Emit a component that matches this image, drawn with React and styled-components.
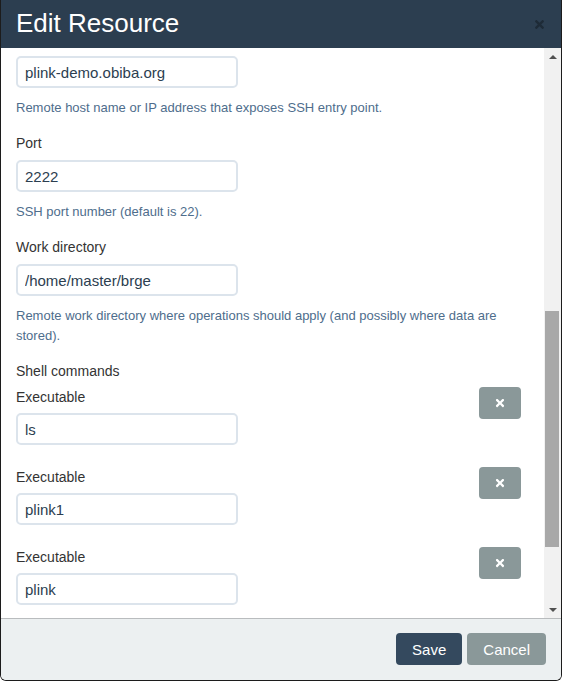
import { useEffect, useRef, useState } from "react";
import styled, { createGlobalStyle } from "styled-components";
import { FaTimes } from "react-icons/fa";

const GlobalStyle = createGlobalStyle`
  html, body {
    margin: 0;
    padding: 0;
    background: #fff;
  }
  body {
    font-family: "Liberation Sans", Arial, Helvetica, sans-serif;
    font-size: 15px;
    color: #2c3e50;
  }
  * {
    box-sizing: border-box;
  }
`;

const Modal = styled.div`
  width: 562px;
  height: 681px;
  display: flex;
  flex-direction: column;
  border: 1px solid #1c1c1c;
  border-top: none;
  border-radius: 0 0 6px 6px;
  overflow: hidden;
  background: #fff;
`;

const Header = styled.div`
  height: 48px;
  flex: none;
  background: #2c3e50;
  display: flex;
  align-items: center;
  justify-content: space-between;
  padding: 0 15px 0 15px;
`;

const Title = styled.h4`
  margin: 0 0 2px;
  color: #fff;
  font-size: 26px;
  font-weight: 400;
  line-height: 1;
`;

const Close = styled.button`
  border: none;
  background: none;
  padding: 0;
  color: #000;
  opacity: 0.3;
  display: flex;
  align-items: center;
  cursor: pointer;
`;

const Body = styled.div`
  flex: 1;
  min-height: 0;
  display: flex;
`;

const Content = styled.div`
  flex: 1;
  overflow: hidden;
  padding: 15px;
`;

const ScrollBar = styled.div`
  width: 17px;
  flex: none;
  background: #f1f1f1;
  display: flex;
  flex-direction: column;
`;

const Arrow = styled.div`
  height: 17px;
  flex: none;
  display: flex;
  justify-content: center;
  align-items: center;

  &::before {
    content: "";
    width: 0;
    height: 0;
    border-left: 4px solid transparent;
    border-right: 4px solid transparent;
    ${(p) =>
      p.$down
        ? "border-top: 4px solid #505050;"
        : "border-bottom: 4px solid #505050;"}
  }
`;

const Track = styled.div`
  flex: 1;
  display: flex;
  flex-direction: column;
`;

const Thumb = styled.div`
  margin: 0 2px 0 1px;
  background: #a8a8a8;
  flex: none;
`;

const FormGroup = styled.div`
  margin-bottom: 15px;
`;

const Label = styled.label`
  display: block;
  font-size: 14px;
  line-height: 21px;
  color: #333;
  margin-bottom: ${(p) => (p.$tight ? 5 : 6)}px;
`;

const Input = styled.input`
  display: block;
  width: 222px;
  height: 32px;
  padding: 0 7px;
  border: 2px solid #dce4ec;
  border-radius: 5px;
  font-family: inherit;
  font-size: 15px;
  color: #2c3e50;
  background: #fff;
  outline: none;
`;

const TextArea = styled.textarea`
  display: block;
  width: 100%;
  height: 73px;
  padding: 5px 7px;
  border: 2px solid #dce4ec;
  border-radius: 5px;
  font-family: inherit;
  font-size: 15px;
  resize: none;
`;

const Help = styled.p`
  margin: 10px 0 0;
  font-size: 13px;
  line-height: 20px;
  color: #4e6d8c;
`;

const Section = styled.div`
  display: flex;
  flex-direction: column;
  gap: 22px;
`;

const CommandRow = styled.div`
  display: flex;
  justify-content: space-between;
  align-items: flex-start;
  padding-right: 8px;
`;

const GreyButton = styled.button`
  height: 32px;
  min-width: ${(p) => (p.$icon ? "42px" : "auto")};
  padding: 0 ${(p) => (p.$icon ? 15 : 16)}px;
  border: none;
  border-radius: 4px;
  background: ${(p) => (p.$primary ? "#34495e" : "#8a9899")};
  color: #fff;
  font-family: inherit;
  font-size: 15px;
  display: inline-flex;
  align-items: center;
  justify-content: center;
  cursor: pointer;
`;

const Footer = styled.div`
  flex: none;
  background: #ecf0f1;
  border-top: 1px solid #b9bcbe;
  padding: 14px 15px 15px 15px;
  display: flex;
  justify-content: flex-end;
  gap: 5px;
`;

function Field({ label, value, help, inputRef }) {
  return (
    <FormGroup>
      {label && <Label>{label}</Label>}
      <Input ref={inputRef} defaultValue={value} />
      {help && <Help>{help}</Help>}
    </FormGroup>
  );
}

const commands = ["ls", "plink1", "plink"];

export default function App() {
  const contentRef = useRef(null);
  const hostRef = useRef(null);
  const trackRef = useRef(null);
  const [thumb, setThumb] = useState({ top: 244, height: 236 });

  useEffect(() => {
    const content = contentRef.current;
    const host = hostRef.current;
    const track = trackRef.current;
    if (!content || !host || !track) return;
    content.scrollTop = host.offsetTop - content.offsetTop - 8;
    const trackH = track.clientHeight;
    const height = (trackH * content.clientHeight) / content.scrollHeight;
    const max = content.scrollHeight - content.clientHeight;
    const top = max > 0 ? ((trackH - height) * content.scrollTop) / max : 0;
    setThumb({ top, height });
  }, []);

  return (
    <>
      <GlobalStyle />
      <Modal>
        <Header>
          <Title>Edit Resource</Title>
          <Close aria-label="Close">
            <FaTimes size={13} />
          </Close>
        </Header>
        <Body>
          <Content ref={contentRef}>
            <Field label="Name" value="brge" help="Name of the resource." />
            <Field label="Title" value="BRGE plink" help="Title of the resource." />
            <FormGroup>
              <Label>Description</Label>
              <TextArea defaultValue="PLINK computation server" />
              <Help>Description of the resource.</Help>
            </FormGroup>
            <Field label="Type" value="SSH" help="Type of the resource." />
            <Field label="Username" value="master" help="User name for the SSH connection." />
            <Field
              label="Host"
              value="plink-demo.obiba.org"
              help="Remote host name or IP address that exposes SSH entry point."
              inputRef={hostRef}
            />
            <Field label="Port" value="2222" help="SSH port number (default is 22)." />
            <Field
              label="Work directory"
              value="/home/master/brge"
              help="Remote work directory where operations should apply (and possibly where data are stored)."
            />
            <Label $tight>Shell commands</Label>
            <Section>
              {commands.map((cmd) => (
                <CommandRow key={cmd}>
                  <div>
                    <Label $tight>Executable</Label>
                    <Input defaultValue={cmd} />
                  </div>
                  <GreyButton $icon aria-label="Remove">
                    <FaTimes size={12} />
                  </GreyButton>
                </CommandRow>
              ))}
              <div>
                <GreyButton>Add</GreyButton>
              </div>
            </Section>
            <Field label="Timeout" value="60" />
          </Content>
          <ScrollBar>
            <Arrow />
            <Track ref={trackRef}>
              <Thumb style={{ marginTop: thumb.top, height: thumb.height }} />
            </Track>
            <Arrow $down />
          </ScrollBar>
        </Body>
        <Footer>
          <GreyButton $primary>Save</GreyButton>
          <GreyButton>Cancel</GreyButton>
        </Footer>
      </Modal>
    </>
  );
}
